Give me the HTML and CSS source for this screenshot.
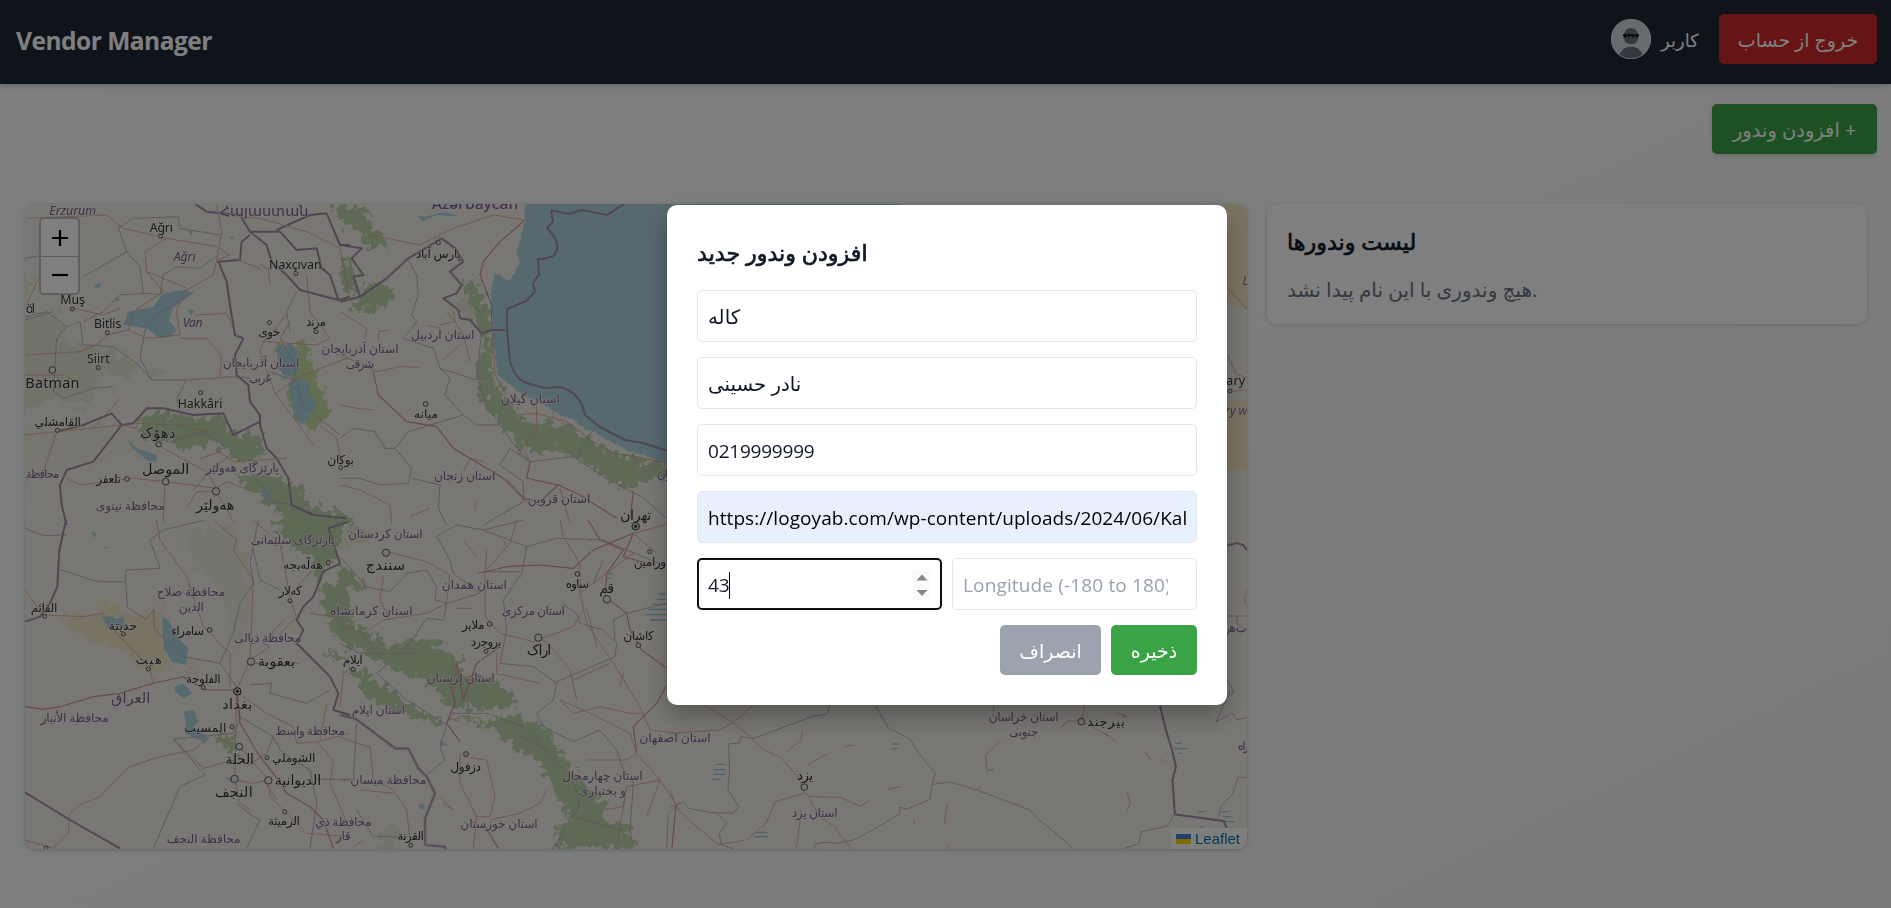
FILE: index.html
```html
<!DOCTYPE html>
<html lang="en">
<head>
<meta charset="utf-8">
<title>Vendor Manager</title>
<link rel="stylesheet" href="styles.css">
</head>
<body>
<div class="page">
  <header class="header">
    <h1 class="brand">Vendor Manager</h1>
    <div class="account">
      <svg class="avatar" viewBox="0 0 120 120">
        <defs><clipPath id="face"><circle cx="60" cy="60" r="59"/></clipPath></defs>
        <circle cx="60" cy="60" r="60" fill="#cfd6db"/>
        <g clip-path="url(#face)">
          <ellipse cx="60" cy="116" rx="36" ry="33" fill="#66727e"/>
          <path d="M38 49Q42 27 60 27Q78 27 82 49V58Q78 76 60 76Q42 76 38 58Z" fill="#66727e"/>
          <path d="M36 46H84V50L80 55H65L61 50H58L54 55H41L36 50Z" fill="#080808"/>
          <path d="M45 49l5 4M68 49l5 4" stroke="#aaa" stroke-width="3"/>
        </g>
        <circle cx="60" cy="60" r="59" fill="none" stroke="#e5e7eb" stroke-width="2"/>
      </svg>
      <span class="user">کاربر</span>
      <button class="btn btn-logout">خروج از حساب</button>
    </div>
  </header>
  <div class="toolbar"><button class="btn btn-add" dir="rtl">+ افزودن وندور</button></div>
  <main class="main">
    <section class="map">
      <svg class="tiles" viewBox="25 204 1222 645" preserveAspectRatio="none">
        <defs>
          <filter id="rough" x="-5%" y="-5%" width="110%" height="110%"><feTurbulence type="fractalNoise" baseFrequency="0.13" numOctaves="3" seed="4"/><feDisplacementMap in="SourceGraphic" scale="24" xChannelSelector="R" yChannelSelector="G"/></filter>
          <filter id="wiggle" x="-5%" y="-5%" width="110%" height="110%"><feTurbulence type="fractalNoise" baseFrequency="0.12" numOctaves="2" seed="9"/><feDisplacementMap in="SourceGraphic" scale="5" xChannelSelector="R" yChannelSelector="G"/></filter>
        </defs>
        <rect x="25" y="204" width="1222" height="645" fill="#f2efe9"/>

        <g class="forest" filter="url(#rough)">
          <g transform="translate(20 195) scale(.33333)">
            <path class="lite" d="M0 380L110 350L140 440L260 460L340 500L330 550L250 530L200 640L90 610L0 650ZM380 510L450 530L440 545L390 535ZM0 260L40 250L30 290L0 310Z"/>
            <path class="lite" d="M160 700L330 700L430 760L280 790L150 830L60 810L0 860V700Z" opacity=".35"/>
            <path d="M350 690L400 650L480 660L570 670L600 660L640 720L720 720L735 790L650 800L590 740L480 770L450 740L370 735ZM650 830L740 840L830 870L860 930L980 960L1000 1000H820L760 930L690 890Z"/>
            <path d="M930 30L990 40V80L940 60ZM980 200L1000 300L960 290Z"/>
            <path fill="#c6daa0" d="M760 450L850 445L875 520L900 560L925 650L880 720L850 690L810 640L800 540Z"/>
          </g>
          <g transform="translate(340 195) scale(.33333)">
            <path d="M0 30L70 40L110 110L150 150L100 165L50 110L0 80ZM30 330L100 260L170 290L150 330L70 350ZM0 190L50 230L60 290L20 270Z"/>
            <path d="M365 245L410 270L440 330L455 390L460 540L500 610L560 690L650 680L700 700L780 750L870 785L980 810V840L860 880L790 840L730 800L640 760L580 780L530 740L480 690L430 620L405 530L425 470L425 410L390 350Z"/>
            <path class="lite" d="M320 320L380 310L410 350L380 370Z"/>
          </g>
          <g transform="translate(20 520) scale(.33333)">
            <path d="M750 0H970L960 70L940 120L890 190L870 110L800 70ZM900 200L990 180L1000 380L930 330ZM600 640L650 650L650 710L620 690ZM910 400L990 400V430Z"/>
            <path class="lite" d="M480 30L640 20L700 140L650 220L530 150ZM800 720L870 730V770ZM600 200L700 190L670 380L640 400Z" opacity=".5"/>
          </g>
          <g transform="translate(340 520) scale(.33333)">
            <path d="M0 120L60 180L60 210L0 190ZM0 290L80 330L140 380L220 360L290 370L380 430L360 460L480 490L540 550L480 570L330 560L250 480L180 460L100 420L0 360ZM20 440L100 470L220 560L310 600L280 610L190 580L90 540ZM330 585L430 600L520 590L610 610L660 690L700 750L790 850L800 900L870 930L890 985H640L650 920L690 900L640 800L590 720L530 690L450 620L360 600Z"/>
            <path class="lite" d="M110 985L130 930L180 910L170 985ZM40 0L100 50L0 80Z"/>
          </g>
        </g>

        <g class="water">
          <path filter="url(#wiggle)" d="M526 200H900V480L667 464L620 447L569 418L517 391L498 375L492 330L491 290L495 273L510 280L520 264L517 250L524 225Z"/>
          <g transform="translate(20 195) scale(.33333)" filter="url(#wiggle)">
            <path d="M310 390L325 350L400 335L430 295L490 285L520 293L460 340L445 375L470 405L455 425L420 430L380 400ZM505 342L525 348L510 364ZM770 460L810 445L835 465L835 530L800 550L775 520ZM805 565L830 550L870 565L870 600L895 630L845 690L820 655ZM320 730L350 760L410 780V800L385 798L335 758ZM720 900L745 885L755 922ZM220 270L245 265L235 282ZM505 105l15 3-8 14zM630 122l14 6-12 6zM285 310l16 2-8 8z"/>
          </g>
          <g transform="translate(20 520) scale(.33333)" filter="url(#wiggle)">
            <path d="M465 500L490 490L517 520L490 535L465 515ZM490 575L520 570L535 605L520 620L565 655L555 670L495 640L500 610ZM615 770L640 775L635 790ZM215 32L230 42L222 55ZM248 82l20-2 28-14-16 8-20 12z"/>
          </g>
          <g transform="translate(340 520) scale(.33333)">
            <path d="M235 855l15-5 5 15-12 4zM300 660l12 10 20 5-30 3z"/>
            <path class="salt" d="M955 222h25M950 238h30M935 253h45M925 268h55M915 284h65M930 300h50M805 161h15M800 175h18"/>
          </g>
          <g transform="translate(340 195) scale(.33333)" filter="url(#wiggle)"><path d="M230 60l25 5 60-15 45 15-70-5-40 18z"/><path d="M450 300l12-15 2 15-8 12z"/></g>
          <g transform="translate(670 690) scale(.3827 .33333)"><path class="salt" d="M120 223h23M115 239h30M112 253h33M108 268h25M583 162h14M580 176h14M1320 160h16M1318 176h36M1330 190h8M1380 365h18M1440 365h20M1445 380h22M1440 395h35M225 427h28M218 440h38M830 240h15M1385 410h8"/></g>
        </g>
        <g fill="#f2dfb3" opacity=".6" filter="url(#rough)">
          <path d="M58 618L96 615L98 602L118 603L119 616L144 615L153 609L158 600L166 640L167 676L147 671L125 650L85 640Z"/>
          <path d="M185 660l15 1 0 14-14 1z" opacity=".5"/>
        </g>
        <g class="water" transform="translate(20 520) scale(.33333)" filter="url(#wiggle)"><path d="M240 285L255 292L275 288L290 298L308 290L320 330L290 318L270 330ZM427 290L445 300L480 360L505 385L497 435L455 425L430 380Z"/></g>
        <path d="M1225 204H1250V309H1240L1225 304ZM1225 401H1250V470H1225Z" fill="#f7e7c3"/>

        <g class="admin">
          <g transform="translate(20 195) scale(.33333)" filter="url(#wiggle)">
            <path d="M0 370L80 350L140 395L180 380L190 450L280 455L350 505L395 555L500 555L640 545L690 550M190 245L320 170L360 215L370 295L420 298L430 240L470 215L540 220L595 180M320 170L295 100L340 70L475 65L480 100L600 120M370 295L300 300L250 350L190 380M500 555L470 610L480 660M140 395L110 430L100 590L130 610L220 580L280 575M520 293L420 350L375 405L360 490L395 555M750 530L830 560L850 630L960 720M810 380L780 430L820 500L830 560M830 290L800 350L810 410M520 885L560 840L630 780L640 770L550 710L450 740M15 190L100 175M690 830L760 920L820 930M15 375L100 350"/>
          </g>
          <g transform="translate(340 195) scale(.33333)" filter="url(#wiggle)">
            <path d="M205 195L230 240L235 300L215 360L230 380L190 430L280 460L300 520L330 550L315 600L370 660L410 690L480 690L530 760L570 800L700 785L800 850L905 905L980 970M370 660L270 690L205 710L165 760L215 820L205 865L120 870L60 850L0 850M0 730L40 700L105 710L135 760L165 760M300 520L410 555M425 415L410 540L440 630L480 690M570 800L510 760L480 810L550 860L550 920L430 990M215 850L300 870L295 940L320 990M770 690L730 750L710 790"/>
          </g>
          <g transform="translate(20 520) scale(.33333)" filter="url(#wiggle)">
            <path d="M15 25L70 47L140 45M110 145L230 185L317 185V150L420 145L390 60L430 30L555 0M317 185L322 262L378 298L402 268V325L490 410L600 430L640 340L660 250L700 190L690 130L715 0M700 90L720 180L780 210M600 430L650 500L660 590L760 650L780 690M690 495L755 490L750 520L860 550L930 510M665 590L640 640L460 657L555 765L480 800L400 985M460 657L550 745L640 720M780 690L820 720L870 750L890 850L870 985M650 850L700 890L720 900L680 985M890 778H990M760 650L740 700L680 740"/>
          </g>
          <g transform="translate(340 520) scale(.33333)" filter="url(#wiggle)">
            <path d="M0 110L80 200L150 215L200 160L260 150L290 200L285 240L320 250L310 300L260 295L210 370L110 460L200 540L320 615L300 680L315 720L260 765M320 250L420 220L340 160L330 120L290 50L350 15L430 30L550 0M430 30L560 80L545 160L490 240L500 330L480 430L580 440L650 490L640 540L590 580L610 620L700 665L780 630L830 690L850 750L880 790L870 930L880 985M430 155L540 155M560 80L650 55L790 60L980 140M665 250L710 280L720 310L790 330L830 370L825 410L640 490M330 580L440 580L550 620L700 780L720 850L640 985M720 850L700 890L860 935M0 370L60 400L220 400M50 610L40 780L0 780M50 870L100 950H250M790 120L760 190M980 250L860 280L820 300L825 360M980 985L985 880L1020 845"/>
          </g>
          <g transform="translate(670 690) scale(.3827 .33333)">
            <path d="M537 46L570 113L625 145L650 190L693 250L685 284L680 328L620 357L600 352V370L560 400L480 450L435 460L400 457L377 464V476M685 284L730 276L790 295L855 323L940 360L965 390L1000 422L1054 476M418 46L410 73L375 78L220 145L185 140L180 160L153 162L156 240L151 300L180 350L165 370L105 368L50 355L35 337L0 350M125 373L148 400L128 430L135 465L165 476M1508 262L1485 262L1470 310L1440 350L1432 384M1187 476L1225 460L1232 425L1300 408L1317 374M1465 0L1427 95L1470 70L1480 90L1508 82"/>
          </g>
          <path d="M1225 285L1247 309M1225 676L1234 692L1225 700"/>
        </g>
        <g class="border">
          <g transform="translate(20 195) scale(.33333)" filter="url(#wiggle)">
            <path d="M525 27L560 50L660 60L690 110L740 150L755 200L800 240L840 285L955 315L990 305M690 110L780 110L830 165L890 160L905 220L930 240L955 315M690 120L665 140L660 195L595 200L620 260L630 330L645 420L670 430L645 480L650 540L685 570L690 620L720 660L720 690L740 760L770 790L805 850L815 930L880 960L980 970M770 105L870 60L920 55L960 150L990 150M720 680L640 720L610 655L520 660L430 640L380 640L340 685L305 690L220 800L140 825L120 870L125 930L140 990M305 690L275 655L190 690L110 710"/>
          </g>
          <g transform="translate(340 195) scale(.33333)" filter="url(#wiggle)">
            <path d="M0 150L65 160L35 190L70 240L40 245L60 305L0 320M60 305L140 250L205 190L305 130L345 160L370 200L330 230L365 270L350 295L310 310L355 345L360 370L390 375L425 415L455 405L500 405"/>
          </g>
          <path d="M551 210L568 214L582 210L607 215L624 204M551 210L553 222L547 228Q564 245 553 256Q547 259 538 259L539 275L533 283L535 292L526 301L507 309V329L510 362Q515 378 524 382L544 388L558 387Q580 390 585 415L600 427L625 440L643 443L668 451"/>
          <g transform="translate(20 520) scale(.33333)" filter="url(#wiggle)">
            <path d="M138 0L118 90L112 200L90 250L60 290L15 305M15 817L150 900L300 985M985 5L925 25L960 130L910 155L880 230L850 260L830 300L850 330L830 370L930 470L955 520L940 570L990 585"/>
          </g>
          <g transform="translate(340 520) scale(.33333)" filter="url(#wiggle)"><path d="M0 585L45 595L165 685L205 685L235 745L260 770L285 820L255 895V975L315 980L317 990"/></g>
          <g transform="translate(670 690) scale(.3827 .33333)"><path d="M1280 46L1297 125L1312 180L1322 230L1313 270L1319 373L1447 393L1455 415"/></g>
          <path d="M1225 546L1237 543L1243 545L1248 551"/>
        </g>
        <g class="roads">
          <g transform="translate(20 195) scale(.33333)" filter="url(#wiggle)">
            <path d="M20 70L260 60L310 100L440 130L590 155L630 180L590 195L580 240L490 290L470 350L480 420L380 430L325 405L260 420L230 450L180 470L15 480M590 30L605 110L590 195M440 130L375 170L380 230L500 280M380 230L430 290L340 350L325 405M525 360L620 355L640 400M480 430L560 430L605 480L600 545M160 340L250 360L300 340M20 330L60 240M600 60L720 70L860 110L960 160M720 205L745 225L750 270M640 190L720 220M860 240L870 350L930 430L890 450L730 440L720 470L765 595L830 680L880 750M765 595L850 540L980 490M800 360L730 440M900 690L950 730L965 820M15 540L130 540L170 560M140 850L180 870L340 850L435 860L590 880L620 860L700 890M435 860L430 980M590 880L560 830L430 760L410 740L350 700L305 690L15 720M350 685L480 690L560 710M590 890L530 890L500 940M540 790L600 770L640 800L800 790M590 890L640 980M220 700L300 610M15 850L70 830L110 710M960 160L990 320"/>
          </g>
          <g transform="translate(340 195) scale(.33333)" filter="url(#wiggle)">
            <path class="trunk" d="M555 75L480 140L430 200L420 240L455 330L455 390"/>
            <path d="M455 390L465 540L500 600M555 75L460 60L340 100L240 150L90 120M110 530L50 500L0 480M110 530L180 515L240 517M300 400L260 390M345 380L370 420L390 500M360 450L310 495M340 350L345 380L300 390M0 350L80 400L75 430M150 405L115 410V440M0 630L50 640L100 645M320 350L345 380M530 660L590 655L680 680L760 740L820 775L890 785L980 805M590 630V700L550 760L570 800M640 640V670M890 785L870 840M370 830L390 790L430 800M210 965L270 940M405 920V945M0 870L60 885L150 930L155 985M560 920L500 850M690 985L660 880"/>
            <path class="trunk" d="M100 530L115 600L200 680L290 695L340 760L390 790L490 850L550 910L600 920L655 870L560 850L570 800M655 870L720 900L830 970M880 890L870 970"/>
          </g>
          <g transform="translate(20 520) scale(.33333)" filter="url(#wiggle)">
            <path class="trunk" d="M15 560L70 568L120 560L220 530L300 520L400 490L490 470L560 510L650 510M650 515L660 610L720 710L760 760L800 820L870 860L910 900L940 985"/>
            <path d="M15 210L70 285L190 290L250 280L290 340L350 400L390 450L400 490M410 0L420 60L500 170L550 320L630 400L630 500M580 0L650 60L640 90L700 180L690 420L650 510M650 515L740 580L820 620L830 670L890 665L990 640M650 515L645 780L700 790L745 780M570 650L520 690L420 710L330 740L240 830L180 855L150 880L145 940L100 985L15 960M580 650L660 680L720 750L745 780L750 830L790 870L860 940L990 950M890 665L940 720L930 790L990 930M900 660L920 550M700 0L780 70L810 230L900 120M870 280L940 290L990 330M645 780L660 850L690 870M780 340L830 290L810 240M690 420L750 380L730 370L790 300M680 430L840 430M770 840L730 780"/>
          </g>
          <g transform="translate(340 520) scale(.33333)" filter="url(#wiggle)">
            <path class="trunk" d="M415 160L500 140L600 135L700 145L760 90L880 40M745 0L780 60L850 90L800 160L795 230L860 280L870 330L905 390L980 445M880 40L850 110L920 130M480 380L410 430L370 540L350 430M330 480L345 550L320 610L360 665M980 495L950 550L880 620L890 700M430 910L475 985"/>
            <path d="M140 95L260 125L330 165L320 250L260 280L130 300L70 340L0 320M435 155L436 290L480 340L580 365L700 320L730 270M435 155L510 70L530 0M660 0L670 50L720 130L720 220L740 310L820 430L900 560L930 630L1020 640M600 350L650 400L690 450L710 540M700 480L810 430M660 540L700 580L780 560L870 580L905 580M470 400L470 460L600 490M130 170L120 240L150 300M120 410L70 350M0 560L10 460L40 440M0 650L50 670L90 680L100 780L160 810L200 870L210 960M160 820L60 810M370 710L440 720L465 830L450 890L410 890L360 790L360 700M410 890L400 985M300 830L340 870L310 850M450 900L540 880L600 850L620 810M660 540L730 570L870 640L890 700L860 720L740 720M890 700L960 780L860 800L850 860L790 870M960 780L920 890M960 780L1020 870M880 100L720 220M880 40L990 10M880 40L950 100M350 265H395M830 980L860 800M740 265L770 380M370 60L410 110M440 90L436 150M490 60L500 80M540 650L630 690M850 460L840 500M340 430L350 470M40 980L70 960"/>
          </g>
          <g transform="translate(670 690) scale(.3827 .33333)" filter="url(#wiggle)">
            <path d="M0 130L130 120L165 97L90 46M165 97L218 46M165 97L245 178L288 202L335 260L350 305L362 320L445 322L497 348L522 332M350 310L275 335L250 400L200 450L125 464L20 360L0 300M362 320L390 380L430 410L473 476M340 390L330 476M345 125L343 150L300 190M360 225L410 192M455 171L480 165M865 150L825 195L828 250M1018 116L1040 93H1075L1083 46M1075 93L1150 140L1165 158M1238 182L1260 212M1280 205L1288 215M1195 308L1203 340L1195 360M793 303L812 292M724 342L716 405M725 465L733 476M570 298L603 290M638 390V402M845 46V68M1165 68L1195 80"/>
            <path class="trunk" d="M15 350L5 476"/>
          </g>
          <path d="M1225 350L1236 374L1247 378M1225 392L1247 390M1247 590Q1242 600 1248 608M1225 616H1247M1237 616V624L1248 632"/>
        </g>

        <g class="dots">
          <g transform="translate(20 195) scale(.33333)"><circle cx="422" cy="124" r="6"/><circle cx="157" cy="342" r="6"/><circle cx="262" cy="413" r="6"/><circle cx="235" cy="518" r="6"/><circle cx="97" cy="525" r="10"/><circle cx="542" cy="593" r="6"/><circle cx="748" cy="383" r="6"/><circle cx="828" cy="236" r="6"/><circle cx="888" cy="410" r="6"/><circle cx="112" cy="706" r="6"/><circle cx="416" cy="748" r="8"/><circle cx="321" cy="852" r="7"/><circle cx="437" cy="860" r="10"/><circle cx="588" cy="889" r="11"/><circle cx="962" cy="818" r="6"/></g>
          <g transform="translate(340 195) scale(.33333)"><circle cx="295" cy="143" r="6"/><circle cx="257" cy="627" r="7"/></g>
          <g transform="translate(20 520) scale(.33333)"><circle cx="925" cy="128" r="6"/><circle cx="810" cy="242" r="6"/><circle cx="74" cy="289" r="6"/><circle cx="310" cy="342" r="6"/><circle cx="569" cy="330" r="7"/><circle cx="385" cy="447" r="6"/><circle cx="693" cy="425" r="11"/><circle cx="550" cy="503" r="6"/><circle cx="652" cy="514" r="11" stroke="#222"/><circle cx="652" cy="514" r="4" fill="#222"/><circle cx="636" cy="620" r="6"/><circle cx="658" cy="680" r="10"/><circle cx="741" cy="713" r="6"/><circle cx="745" cy="781" r="11"/><circle cx="644" cy="777" r="11"/><circle cx="794" cy="875" r="6"/><circle cx="78" cy="984" r="6"/></g>
          <g transform="translate(340 520) scale(.33333)"><circle cx="138" cy="98" r="11"/><circle cx="712" cy="162" r="7"/><circle cx="801" cy="238" r="11"/><circle cx="929" cy="95" r="6"/><circle cx="449" cy="312" r="7"/><circle cx="438" cy="394" r="6"/><circle cx="595" cy="353" r="11"/><circle cx="895" cy="376" r="7"/><circle cx="40" cy="448" r="6"/><circle cx="378" cy="702" r="7"/><circle cx="212" cy="976" r="6"/><circle cx="887" cy="19" r="11" stroke="#222"/><circle cx="887" cy="19" r="4" fill="#222"/><circle cx="1393" cy="801" r="10"/><circle cx="2224" cy="605" r="10"/></g>
          <circle cx="1230" cy="391" r="2"/>
        </g>

        <g class="labels">
          <g transform="translate(20 195) scale(.33333)">
            <text class="region it" x="158" y="59" textLength="140" lengthAdjust="spacingAndGlyphs">Erzurum</text>
            <text class="region state" x="732" y="64" textLength="266" lengthAdjust="spacingAndGlyphs">Հայաստան</text>
            <text x="424" y="110" textLength="70">Ağrı</text>
            <text class="region it" x="494" y="199" textLength="66">Ağrı</text>
            <text x="826" y="222" textLength="158">Naxçıvan</text>
            <text x="158" y="328" textLength="74">Muş</text>
            <text x="31" y="354" textLength="28">öl</text>
            <text x="263" y="400" textLength="82">Bitlis</text>
            <text class="region it" x="518" y="396" textLength="60">Van</text>
            <text x="235" y="503" textLength="68">Siirt</text>
            <text class="big" x="97" y="578" textLength="162">Batman</text>
            <text x="540" y="639" textLength="134">Hakkâri</text>
            <text x="888" y="392" textLength="60">مرند</text>
            <text x="748" y="422" textLength="66">خوی</text>
            <text class="region" x="723" y="517" textLength="230">استان آذربایجان</text>
            <text class="region" x="721" y="562" textLength="68">غربی</text>
            <text class="region" x="1020" y="474" textLength="232">استان آذربایجان</text>
            <text class="region" x="1020" y="518" textLength="86">شرقی</text>
            <text x="113" y="692" textLength="140">القامشلي</text>
            <text class="big" x="413" y="729" textLength="106">دهۆک</text>
            <text class="big" x="437" y="837" textLength="142">الموصل</text>
            <text x="266" y="865" textLength="74">تلعفر</text>
            <text class="region" x="667" y="832" textLength="220">پارێزگای هەولێر</text>
            <text class="region" x="68" y="850" textLength="102">محافظة</text>
            <text class="region" x="331" y="946" textLength="208">محافظة نينوى</text>
            <text class="big" x="586" y="945" textLength="114">هەولێر</text>
            <text x="962" y="808" textLength="80">بوکان</text>
          </g>
          <g transform="translate(340 195) scale(.33333)">
            <text class="region state" x="405" y="41" textLength="260" lengthAdjust="spacingAndGlyphs">Azərbaycan</text>
            <text x="295" y="188" textLength="136">پارس آباد</text>
            <text class="region" x="308" y="431" textLength="190">استان اردبیل</text>
            <text class="region" x="571" y="623" textLength="178">استان گیلان</text>
            <text x="258" y="669" textLength="72">میانه</text>
            <text class="region" x="374" y="856" textLength="184">استان زنجان</text>
            <text class="region" x="657" y="924" textLength="188">استان قزوین</text>
            <text class="big" x="887" y="974" textLength="94">تهران</text>
            <text class="region" x="1042" y="850" textLength="184">استان مازندران</text>
          </g>
          <g transform="translate(20 520) scale(.33333)">
            <text class="region" x="818" y="71" textLength="252">پارێزگای سلێمانی</text>
            <text x="849" y="147" textLength="118">هەڵەبجە</text>
            <text x="811" y="224" textLength="70">کەلار</text>
            <text class="region" x="513" y="227" textLength="206">محافظة صلاح</text>
            <text class="region" x="514" y="272" textLength="76">الدين</text>
            <text x="72" y="275" textLength="80">القائم</text>
            <text x="309" y="329" textLength="86">حديثة</text>
            <text x="503" y="344" textLength="98">سامراء</text>
            <text class="region" x="743" y="365" textLength="202">محافظة ديالى</text>
            <text x="386" y="432" textLength="78">هيت</text>
            <text class="big" x="769" y="439" textLength="112">بعقوبة</text>
            <text x="550" y="489" textLength="104">الفلوجة</text>
            <text class="big" x="652" y="566" textLength="90">بغداد</text>
            <text class="region land" x="332" y="549" textLength="118">العراق</text>
            <text class="region" x="164" y="605" textLength="204">محافظة الأنبار</text>
            <text x="556" y="635" textLength="126">المسيب</text>
            <text class="region" x="870" y="645" textLength="210">محافظة واسط</text>
            <text class="big" x="659" y="732" textLength="86">الحلة</text>
            <text x="821" y="727" textLength="130">الشوملي</text>
            <text class="big" x="834" y="795" textLength="140">الديوانية</text>
            <text class="big" x="641" y="830" textLength="114">النجف</text>
            <text x="792" y="916" textLength="96">الرميثة</text>
            <text class="region" x="551" y="969" textLength="222">محافظة النجف</text>
            <text class="region" x="970" y="917" textLength="170">محافظة ذي</text>
            <text class="region" x="970" y="961" textLength="44">قار</text>
          </g>
          <g transform="translate(340 520) scale(.33333)">
            <text class="region" x="136" y="53" textLength="224">استان کردستان</text>
            <text class="big" x="136" y="151" textLength="118">سنندج</text>
            <text class="region" x="403" y="206" textLength="196">استان همدان</text>
            <text class="region" x="94" y="285" textLength="248">استان کرمانشاه</text>
            <text class="region" x="580" y="285" textLength="190">استان مرکزی</text>
            <text x="712" y="204" textLength="70">ساوه</text>
            <text class="big" x="800" y="219" textLength="44">قم</text>
            <text x="930" y="139" textLength="98">ورامین</text>
            <text x="400" y="327" textLength="68">ملایر</text>
            <text x="438" y="379" textLength="92">بروجرد</text>
            <text class="big" x="597" y="405" textLength="74">اراک</text>
            <text x="896" y="360" textLength="92">کاشان</text>
            <text x="38" y="431" textLength="60">ایلام</text>
            <text class="region" x="362" y="485" textLength="204">استان لرستان</text>
            <text class="region" x="115" y="581" textLength="160">استان ایلام</text>
            <text x="377" y="754" textLength="92">دزفول</text>
            <text class="region" x="145" y="791" textLength="228">محافظة ميسان</text>
            <text class="region" x="787" y="779" textLength="242">استان چهارمحال</text>
            <text class="region" x="787" y="824" textLength="142">و بختیاری</text>
            <text class="region" x="1005" y="665" textLength="214">استان اصفهان</text>
            <text class="region" x="477" y="924" textLength="232">استان خوزستان</text>
            <text x="212" y="961" textLength="80">القرنة</text>
            <text class="big" x="1395" y="779" textLength="50">یزد</text>
            <text class="region" x="1424" y="892" textLength="138">استان یزد</text>
            <text class="region" x="2051" y="602" textLength="210">استان خراسان</text>
            <text class="region" x="2051" y="648" textLength="88">جنوبی</text>
            <text x="2298" y="617" textLength="112">بیرجند</text>
          </g>
          <g transform="translate(1225 195) scale(.33333)">
            <text class="region it" x="61" y="270" textLength="15">L</text>
            <text x="32" y="571" textLength="56">ary</text>
            <text class="region it" x="34" y="659" textLength="66">ry w</text>
            <text class="region" x="30" y="1311" textLength="74">ب هرا</text>
            <text class="region" x="56" y="1665" textLength="36">راه</text>
          </g>
        </g>
      </svg>
      <div class="zoom">
        <span><svg viewBox="0 0 16 16"><path d="M0 8h16M8 0v16"/></svg></span>
        <span><svg viewBox="0 0 16 16"><path d="M0 8h16"/></svg></span>
      </div>
      <div class="credit"><svg viewBox="0 0 12 8"><path fill="#4C7BE1" d="M0 0h12v4H0z"/><path fill="#FFD500" d="M0 4h12v4H0z"/></svg>Leaflet</div>
    </section>
    <aside class="card">
      <h2 class="title">لیست وندورها</h2>
      <p class="empty">هیچ وندوری با این نام پیدا نشد.</p>
    </aside>
  </main>
</div>
<div class="overlay">
  <form class="modal">
    <h2 class="title t-add">افزودن وندور جدید</h2>
    <div class="field fa">کاله</div>
    <div class="field fa">نادر حسینی</div>
    <div class="field">0219999999</div>
    <div class="field autofill"><span class="clip">https://logoyab.com/wp-content/uploads/2024/06/Kaleh.png</span></div>
    <div class="pair">
      <div class="field focus"><span>43</span><i class="caret"></i>
        <svg class="spin" viewBox="0 0 18 30"><rect width="18" height="30" fill="#fafafa"/><path d="M3.500 10.500h11L9 4.500zM3.500 20h11L9 26z" fill="#858585"/></svg>
      </div>
      <div class="field hint"><span class="clip short">Longitude (-180 to 180)</span></div>
    </div>
    <div class="actions"><button type="button" class="btn btn-cancel">انصراف</button><button type="button" class="btn btn-save">ذخیره</button></div>
  </form>
</div>
</body>
</html>
```

FILE: styles.css
```css
* { box-sizing: border-box; margin: 0; }
body { font-family: "Open Sans", "Noto Sans", "DejaVu Sans", sans-serif; font-size: 19px; line-height: 30px; color: #101828; overflow: hidden; }
.page { height: 908px; background: linear-gradient(to bottom right, #fafcfa, #f8fbfa 50%, #f2f6f6); }
.header { height: 84px; padding: 14px 14px 20px 16px; display: flex; justify-content: space-between; background: #1f2937; box-shadow: 0 2px 5px rgba(0,0,0,.2); position: relative; }
.brand { font-size: 24.5px; line-height: 54px; font-weight: 700; letter-spacing: -.5px; color: #fff; }
.account { display: flex; color: #fff; }
.avatar { width: 40px; height: 40px; margin-top: 5px; }
.user { margin: 11px 20px 0 10px; width: 38px; font-size: 18px; white-space: nowrap; }
.btn { height: 50px; border: 0; border-radius: 5px; padding: 2px 0 0; font: inherit; color: #fff; white-space: nowrap; text-align: center; }
.btn-logout { width: 158px; background: #cf2828; }
.toolbar { display: flex; justify-content: flex-end; padding: 20px 14px 50px; }
.btn-add { width: 165px; font-size: 19.5px; background: #3aa346; box-shadow: 0 2px 4px rgba(0,0,0,.15); }
.main { display: grid; grid-template-columns: 1222px 600px; gap: 20px; padding-left: 25px; align-items: start; }
.map { position: relative; height: 645px; border-radius: 10px; overflow: hidden; box-shadow: 0 1px 4px rgba(0,0,0,.2); }
.tiles { display: block; width: 100%; height: 100%; }
.forest { fill: #bdd3ac; }
.forest .lite { fill: #e2e6d2; }
.water { fill: #aad3df; }
.salt { stroke: #92c5da; stroke-width: 4; fill: none; }
.admin, .border, .roads { fill: none; stroke-linejoin: round; }
.admin path, .border path, .roads path { vector-effect: non-scaling-stroke; }
.admin { stroke: #bbb0bf; stroke-width: 1; }
.border { stroke: #a08da5; stroke-width: 2; }
.roads { stroke: #dfa896; stroke-width: .9; }
.trunk { stroke: #d28a98; stroke-width: 1.1; }
.dots { fill: #e8e8e4; stroke: #555; stroke-width: 3; }
.dots > circle { stroke-width: 1; }
.labels { font-family: "Noto Sans", "DejaVu Sans", sans-serif; font-size: 37px; fill: #333; text-anchor: middle; paint-order: stroke; stroke: rgba(245,242,236,.75); stroke-width: 5px; stroke-linejoin: round; }
.labels .big { font-size: 43px; }
.labels .region { fill: #7d5f8c; }
.labels .state { font-size: 42px; font-weight: 500; }
.labels .land { font-size: 44px; }
.labels .it { font-style: italic; }
.zoom { position: absolute; left: 14px; top: 13px; width: 41px; border: 2px solid rgba(0,0,0,.25); border-radius: 5px; background: #fff; }
.zoom span { height: 37px; display: flex; align-items: center; justify-content: center; }
.zoom span + span { border-top: 1px solid #bbb; }
.zoom svg { width: 16px; height: 16px; fill: none; stroke: #000; stroke-width: 2.2; }
.credit { position: absolute; right: 0; bottom: 0; width: 77px; height: 21px; background: rgba(255,255,255,.8); display: flex; align-items: center; gap: 4px; padding-left: 6px; font: 15px/21px "Liberation Sans", sans-serif; color: #0078a8; }
.credit svg { width: 15px; height: 10px; }
.card { height: 120px; padding: 20px; border-radius: 10px; background: #fff; box-shadow: 0 1px 4px rgba(0,0,0,.15); }
.title { font-size: 22.2px; line-height: 35px; font-weight: 400; -webkit-text-stroke: .7px currentColor; white-space: nowrap; }
.empty { margin-top: 16px; font-size: 20px; color: #6a7282; white-space: nowrap; }
.overlay { position: absolute; inset: 0; background: rgba(0,0,0,.5); padding: 205px 0 0 667px; }
.modal { width: 560px; height: 500px; padding: 30px; border-radius: 10px; background: #fff; box-shadow: 0 12px 25px rgba(0,0,0,.28); display: flex; flex-direction: column; gap: 15px; }
.t-add { margin-bottom: 5px; }
.field { height: 52px; padding: 11px 10px 9px; border: 1px solid #e5e7eb; border-radius: 5px; line-height: 30px; white-space: nowrap; letter-spacing: -.22px; }
.fa { letter-spacing: 0; font-size: 19.8px; }
.autofill { background: #e8f0fe; color: #000; letter-spacing: .07px; }
.clip { display: block; overflow: hidden; }
.short { width: 205px; }
.pair { display: grid; grid-template-columns: 1fr 1fr; gap: 10px; }
.focus { border: 2px solid #101010; padding: 10px 9px 8px; display: flex; align-items: center; }
.caret { width: 1px; height: 27px; background: #000; }
.spin { width: 18px; height: 30px; margin-left: auto; }
.hint { color: #99a1af; letter-spacing: .15px; }
.actions { display: flex; justify-content: flex-end; gap: 10px; }
.btn-cancel { width: 101px; background: #9ca3af; }
.btn-save { width: 86px; background: #3aa346; }
```
